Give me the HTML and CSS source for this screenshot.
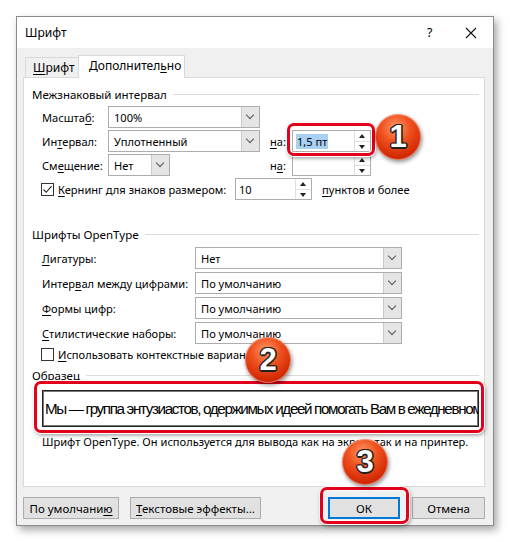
FILE: index.html
```html
<!DOCTYPE html>
<html lang="ru">
<head>
    <meta charset="UTF-8">
    <title>Шрифт</title>
    <link rel="stylesheet" href="styles.css">
</head>
<body>
    <div class="window">
        <div class="titlebar">
            <span class="title">Шрифт</span>
            <span class="help">?</span>
            <span class="close">
                <svg width="12" height="12" viewBox="0 0 12 12"><path d="M1 1 L11 11 M11 1 L1 11" stroke="#111" stroke-width="1.1" fill="none"/></svg>
            </span>
        </div>

        <div class="tabs">
            <div class="tab"><u>Ш</u>рифт</div>
            <div class="tab active">Дополнител<u>ь</u>но</div>
        </div>

        <div class="panel">
            <div class="group">Межзнаковый интервал</div>

            <div class="row">
                <span class="lbl lbl-a">Масшта<u>б</u>:</span>
                <div class="combo combo-a"><span>100%</span><i class="drop"></i></div>
            </div>
            <div class="row">
                <span class="lbl lbl-a">Ин<u>т</u>ервал:</span>
                <div class="combo combo-a"><span>Уплотненный</span><i class="drop"></i></div>
                <span class="lbl lbl-na"><u>н</u>а:</span>
                <div class="spin"><span class="spin-text"><span class="sel">1,5 пт</span></span><i class="arrows"><b class="up"></b><b class="down"></b></i></div>
            </div>
            <div class="row">
                <span class="lbl lbl-a">См<u>е</u>щение:</span>
                <div class="combo combo-s"><span>Нет</span><i class="drop"></i></div>
                <span class="lbl lbl-na lbl-na2">н<u>а</u>:</span>
                <div class="spin"><span class="spin-text"></span><i class="arrows"><b class="up"></b><b class="down"></b></i></div>
            </div>
            <div class="row">
                <span class="check-wrap">
                    <span class="checkbox">
                        <svg width="11" height="11" viewBox="0 0 11 11"><path d="M1.5 5.5 L4.2 8.3 L9.6 2.2" stroke="#222" stroke-width="1.1" fill="none"/></svg>
                    </span>
                    <span><u>К</u>ернинг для знаков размером:</span>
                </span>
                <div class="spin spin-k"><span class="spin-text">10</span><i class="arrows"><b class="up"></b><b class="down"></b></i></div>
                <span class="lbl lbl-pt"><u>п</u>унктов и более</span>
            </div>

            <div class="group group-2">Шрифты OpenType</div>

            <div class="row row-b">
                <span class="lbl lbl-b"><u>Л</u>игатуры:</span>
                <div class="combo combo-b"><span>Нет</span><i class="drop"></i></div>
            </div>
            <div class="row row-b">
                <span class="lbl lbl-b">Интер<u>в</u>ал между цифрами:</span>
                <div class="combo combo-b"><span>По умолчанию</span><i class="drop"></i></div>
            </div>
            <div class="row row-b">
                <span class="lbl lbl-b"><u>Ф</u>ормы цифр:</span>
                <div class="combo combo-b"><span>По умолчанию</span><i class="drop"></i></div>
            </div>
            <div class="row row-b">
                <span class="lbl lbl-b"><u>С</u>тилистические наборы:</span>
                <div class="combo combo-b"><span>По умолчанию</span><i class="drop"></i></div>
            </div>
            <div class="row row-c">
                <span class="check-wrap">
                    <span class="checkbox"></span>
                    <span><u>И</u>спользовать контекстные варианты</span>
                </span>
            </div>

            <div class="group group-3">Образец</div>
            <div class="sample">Мы — группа энтузиастов, одержимых идеей помогать Вам в ежедневном</div>
            <div class="desc">Шрифт OpenType. Он используется для вывода как на экран, так и на принтер.</div>
        </div>

        <div class="buttons">
            <button class="btn btn-def">По умолчани<u>ю</u></button>
            <button class="btn btn-fx"><u>Т</u>екстовые эффекты...</button>
            <span class="spacer"></span>
            <button class="btn btn-ok">ОК</button>
            <button class="btn btn-cancel">Отмена</button>
        </div>
    </div>

    <!-- пометки поверх скриншота -->
    <div class="frame frame-1"></div>
    <div class="frame frame-2"></div>
    <div class="frame frame-3"></div>
    <div class="badge badge-1">1</div>
    <div class="badge badge-2">2</div>
    <div class="badge badge-3">3</div>
</body>
</html>
```

FILE: styles.css
```css
body {
    margin: 0;
    padding: 16px;
    background-color: #fff;
    font-family: 'Noto Sans', sans-serif;
    font-size: 11.1px;
    color: #000;
}
u {
    text-decoration: underline;
    text-underline-offset: 2px;
}
.window {
    box-sizing: border-box;
    width: 478px;
    height: 510px;
    border: 1px solid #8a8a8a;
    background-color: #f0f0f0;
    box-shadow: 3px 4px 8px rgba(0, 0, 0, 0.35);
    display: flex;
    flex-direction: column;
}
.titlebar {
    height: 31px;
    background-color: #fff;
    display: flex;
    align-items: center;
    padding-left: 8px;
    font-size: 12px;
}
.title {
    flex: 1;
}
.help {
    width: 14px;
    margin-right: 24px;
    font-size: 12.5px;
}
.close {
    width: 12px;
    margin-right: 16px;
    display: flex;
}
.tabs {
    display: flex;
    align-items: flex-end;
    margin: 6px 0 0 8px;
    height: 23px;
    position: relative;
    z-index: 1;
}
.tab {
    height: 20px;
    line-height: 20px;
    padding: 0 7px;
    border: 1px solid #d9d9d9;
    border-bottom: none;
    background-color: #f0f0f0;
    box-sizing: border-box;
    font-size: 12px;
}
.tab:first-child {
    border-right: none;
    width: 53px;
}
.tab.active {
    height: 23px;
    line-height: 20px;
    background-color: #fff;
    width: 107px;
    padding-left: 10px;
    margin-bottom: -1px;
}
.panel {
    box-sizing: border-box;
    height: 410px;
    margin: 0 8px 0 6px;
    background-color: #fff;
    border: 1px solid #d9d9d9;
    padding: 8px 5px 0 8px;
}
.group {
    display: flex;
    align-items: center;
    height: 16px;
    white-space: nowrap;
    font-size: 11.5px;
}
.group::after {
    content: '';
    flex: 1;
    height: 1px;
    background-color: #dcdcdc;
    margin-left: 6px;
}
.group-2 {
    margin-top: 26px;
}
.group-3 {
    margin-top: 5px;
}
.row {
    display: flex;
    align-items: center;
    height: 22px;
    margin-top: 2px;
    padding-left: 10px;
    white-space: nowrap;
}
.group + .row {
    margin-top: 4px;
}
.row-b {
    margin-top: 3px;
}
.group-2 + .row-b {
    margin-top: 5px;
}
.row-c {
    height: 16px;
    margin-top: 2px;
}
.lbl-a {
    width: 66px;
}
.lbl-b {
    width: 153px;
}
.lbl-na {
    width: 22px;
    margin-left: 10px;
}
.lbl-na2 {
    margin-left: 100px;
}
.lbl-pt {
    margin-left: 10px;
}
.combo {
    box-sizing: border-box;
    height: 22px;
    border: 1px solid #adadad;
    background-color: #fff;
    display: flex;
    align-items: center;
}
.combo span {
    flex: 1;
    padding-left: 5px;
}
.combo-a {
    width: 152px;
}
.combo-s {
    width: 62px;
}
.combo-b {
    width: 207px;
}
.drop {
    align-self: stretch;
    width: 17px;
    background-color: #e5e5e5;
    border-left: 1px solid #c9c9c9;
    position: relative;
}
.drop::after {
    content: '';
    position: absolute;
    left: 5px;
    top: 5px;
    width: 5px;
    height: 5px;
    border-right: 1px solid #555;
    border-bottom: 1px solid #555;
    transform: rotate(45deg);
}
.spin {
    box-sizing: border-box;
    width: 79px;
    height: 22px;
    border: 1px solid #adadad;
    background-color: #fff;
    display: flex;
}
.spin-text {
    flex: 1;
    display: flex;
    align-items: center;
    padding-left: 3px;
}
.sel {
    background-color: #a8d0f2;
    padding: 0 1px;
}
.arrows {
    width: 15px;
    display: flex;
    flex-direction: column;
    border-left: 1px solid #e0e0e0;
}
.arrows b {
    flex: 1;
    position: relative;
}
.arrows b::after {
    content: '';
    position: absolute;
    left: 4px;
    border-left: 3.5px solid transparent;
    border-right: 3.5px solid transparent;
}
.up::after {
    top: 3px;
    border-bottom: 4px solid #222;
}
.down {
    border-top: 1px solid #e0e0e0;
}
.down::after {
    top: 3px;
    border-top: 4px solid #222;
}
.check-wrap {
    display: flex;
    align-items: center;
    margin-left: -1px;
    width: 194px;
    gap: 4px;
}
.row-c .check-wrap {
    width: auto;
}
.checkbox {
    box-sizing: border-box;
    width: 13px;
    height: 13px;
    border: 1px solid #333;
    display: flex;
    align-items: center;
    justify-content: center;
}
.spin-k {
    width: 77px;
}
.sample {
    box-sizing: border-box;
    height: 37px;
    margin: 7px 0 0 10px;
    border: 1px solid #222;
    box-shadow: inset 0 0 0 1px #777;
    display: flex;
    align-items: center;
    padding-left: 2px;
    overflow: hidden;
    white-space: nowrap;
    font-family: 'Liberation Sans', sans-serif;
    font-size: 15.2px;
    letter-spacing: -1.35px;
}
.desc {
    margin: 7px 0 0 10px;
    height: 16px;
    line-height: 16px;
    white-space: nowrap;
}
.buttons {
    display: flex;
    margin: 10px 8px 0 6px;
    gap: 11px;
}
.spacer {
    flex: 1;
}
.btn {
    box-sizing: border-box;
    height: 22px;
    border: 1px solid #adadad;
    background-color: #e1e1e1;
    font-family: 'Noto Sans', sans-serif;
    font-size: 11.5px;
    color: #000;
    padding: 0;
}
.btn-def {
    width: 96px;
}
.btn-fx {
    width: 131px;
}
.btn-ok {
    width: 72px;
    border-color: #0078d7;
    box-shadow: inset 0 0 0 1px #0078d7;
}
.btn-cancel {
    width: 73px;
    margin-left: 1px;
}
.frame {
    position: absolute;
    box-sizing: border-box;
    border: 3px solid #e3001b;
    border-radius: 7px;
    box-shadow: inset 0 0 0 1px #fff, 0 0 0 1px #fff, 1px 2px 4px rgba(0, 0, 0, 0.45);
}
.frame-1 {
    left: 287px;
    top: 123px;
    width: 88px;
    height: 33px;
}
.frame-2 {
    left: 34px;
    top: 381px;
    width: 450px;
    height: 52px;
}
.frame-3 {
    left: 320px;
    top: 487px;
    width: 89px;
    height: 37px;
}
.badge {
    position: absolute;
    width: 46px;
    height: 46px;
    border-radius: 50%;
    background: radial-gradient(circle at 45% 30%, #ff9a6a 0%, #f0521f 35%, #d42a05 70%, #a81800 100%);
    box-shadow: 1px 2px 4px rgba(0, 0, 0, 0.45), inset 0 0 0 1px rgba(255, 255, 255, 0.35);
    color: #fff;
    font-family: 'Liberation Sans', sans-serif;
    font-weight: bold;
    font-size: 31px;
    line-height: 46px;
    text-align: center;
    text-shadow: -1.5px 0 #222, 1.5px 0 #222, 0 -1.5px #222, 0 1.5px #222, -1px -1px #222, 1px 1px #222, -1px 1px #222, 1px -1px #222;
}
.badge-1 {
    left: 375px;
    top: 114px;
}
.badge-2 {
    left: 245px;
    top: 337px;
}
.badge-3 {
    left: 342px;
    top: 439px;
}
```
